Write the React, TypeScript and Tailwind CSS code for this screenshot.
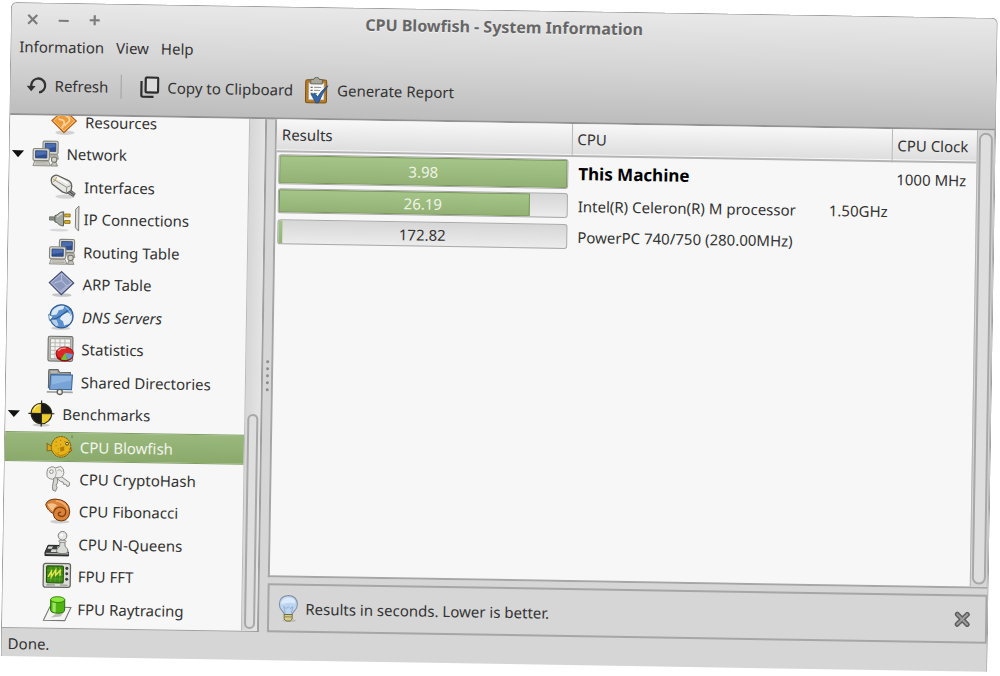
import React from "react";

type IconName =
  | "resources" | "network" | "interfaces" | "plug" | "arp" | "globe" | "stats" | "folder"
  | "target" | "fish" | "keys" | "shell" | "queens" | "scope" | "raytrace";

const Screens = () => (
  <>
    <ellipse cx="13" cy="22.5" rx="9" ry="1.2" fill="#d0d0d0" />
    <rect x="9.5" y="0.5" width="14" height="12" rx="1.5" fill="#d4d4cc" stroke="#84847c" />
    <rect x="11.6" y="2.5" width="9.8" height="7.4" fill="#2d4f94" stroke="#243a6b" strokeWidth="0.7" />
    <path d="M12 2.9h9v3l-9 1.6z" fill="#4c6eae" />
    <path d="M15 13h8l1 4h-6z" fill="#b9b9b1" stroke="#84847c" strokeWidth="0.7" />
    <rect x="0.5" y="7.5" width="15" height="11" rx="1.5" fill="#dcdcd4" stroke="#84847c" />
    <rect x="2.8" y="9.5" width="10.4" height="6.6" fill="#2d4f94" stroke="#243a6b" strokeWidth="0.7" />
    <path d="M3.2 9.900h9.600v2.600l-9.600 1.700z" fill="#4c6eae" />
    <path d="M2 19h13l1.500 4.300h-16z" fill="#d8d8d0" stroke="#84847c" strokeWidth="0.8" />
    <path d="M3 20.500h11M2.600 21.800h12" stroke="#9a9a92" strokeWidth="0.600" />
    <circle cx="20" cy="17.500" r="2.500" fill="#d4d4cc" stroke="#77776f" />
    <path d="M18.500 20.200h3.400l1.300 3.200h-6z" fill="#c4c4bc" stroke="#77776f" strokeWidth="0.700" />
  </>
);

const drawings: Record<IconName, React.ReactNode> = {
  resources: (
    <>
      <ellipse cx="13" cy="22" rx="9" ry="2" fill="#d2d2d2" />
      <path d="M12 0.7 23.3 11 12 22 0.7 11z" fill="#ee9a38" stroke="#b4621a" />
      <path d="M12 2.4 21.6 11 12 20.3 2.4 11z" fill="none" stroke="#f8c37c" strokeWidth="0.9" />
      <path d="M7 9c2 3 4-1 5 3s-3 3-1 6M12 4c0 4 5 2 5 6s-4 2-4 6" fill="none" stroke="#f9d3a0" strokeWidth="1.6" />
    </>
  ),
  network: <Screens />,
  interfaces: (
    <>
      <ellipse cx="14" cy="21" rx="9" ry="2" fill="#d5d5d5" />
      <path d="M18 14l5.400 4-1.800 2.800-6-3.400z" fill="#8d8d8d" stroke="#555" strokeWidth="0.8" />
      <path d="M17 15.500l5 3.800" stroke="#3f3f3f" strokeWidth="0.9" />
      <path d="M1 5.500C1 3 4.500.600 7 1.600L17 6.200q3 1.600 3 5.400l-.6 3.800-4 2.500-4-1.300L2 9.500q-1-1-1-4z" fill="#e6e6e2" stroke="#5e5e5a" strokeWidth="1.200" />
      <path d="M3 5.200 15.500 12.400l-.4 4.600M15.500 12.400l4.200-2" fill="none" stroke="#8f8f8b" strokeWidth="0.9" />
      <path d="M5.500 3.200 16 8.600" stroke="#fff" strokeWidth="1.500" />
      <path d="M3 7.500 6.300 3" stroke="#c9a94a" strokeWidth="1" />
    </>
  ),
  plug: (
    <>
      <ellipse cx="9" cy="22.500" rx="9" ry="1.300" fill="#d8d8d8" />
      <path d="M0 10.300h6v3H0z" fill="#8b8f86" stroke="#60645b" strokeWidth="0.7" />
      <path d="M5 9c3 0 3-3.500 8-3.500v13c-5 0-5-3.500-8-3.500z" fill="#a7aaa3" stroke="#555a50" strokeWidth="0.9" />
      <path d="M7 10c2-.5 2.500-2.500 4.500-2.800" stroke="#e3e5e0" fill="none" />
      <path d="M14 7.500h5v2.600h-5zM14 13.500h5v2.600h-5z" fill="#d8b42c" stroke="#8a6c10" strokeWidth="0.8" />
      <path d="M27 0v23l-3-3V3z" fill="#dcdcd8" stroke="#7b7b77" strokeWidth="0.9" />
    </>
  ),
  arp: (
    <>
      <ellipse cx="12.500" cy="22.300" rx="9" ry="1.700" fill="#c6c6c6" />
      <path d="M12 0.700 23.300 11 12 22 0.700 11z" fill="#8c98bc" stroke="#424c72" />
      <path d="M12 2.400 21.600 11 12 20.300 2.400 11z" fill="none" stroke="#b9c2dc" strokeWidth="0.9" />
      <path d="M12 3v6L5 11.500M12 9l5 5-6 5M17 14l4-3" fill="none" stroke="#b4bdd8" strokeWidth="1" />
    </>
  ),
  globe: (
    <>
      <ellipse cx="12" cy="22.500" rx="9" ry="1.500" fill="#ccc" />
      <circle cx="12.500" cy="11.500" r="10.700" fill="#5b90cc" stroke="#2a558f" />
      <path d="M4.500 5.500q5.500-5 10.500-3.500l-1 3-4 1-2 4-5 1q0-4 1.500-5.500z" fill="#d9e6f4" />
      <path d="M13 10l5-2 4 2q1 5-2.500 8.500L15 20l-1-4-3-2z" fill="#e5eef8" />
      <path d="M3 14l5 1 2 5-2 .8q-4-2.500-5-6.800z" fill="#b5cfea" />
      <path d="M1 14q6 1 12-4 5-4 8.500-5.500" fill="none" stroke="#2c5f9f" strokeWidth="1.300" />
      <path d="M16 3q5 3 5 8" fill="none" stroke="#a9c8e8" strokeWidth="1" />
      <path d="M0.500 10l4.500 2-3.500 3.500z" fill="#eef4fb" stroke="#4874ab" strokeWidth="0.7" />
    </>
  ),
  stats: (
    <>
      <rect x="0.600" y="0.600" width="22.800" height="22.800" rx="1.500" fill="#bebeba" stroke="#6f6f6c" />
      <rect x="2.800" y="2.800" width="18.400" height="18.400" fill="#f3f3f1" stroke="#90908c" strokeWidth="0.7" />
      <path d="M3 6.500h18M3 10h18M3 13.500h18M3 17h18M7 3v18M11.500 3v18M16 3v18" stroke="#b0b0ac" strokeWidth="0.800" />
      <ellipse cx="16" cy="18" rx="8" ry="5.600" fill="#9a0c0c" />
      <ellipse cx="16" cy="16" rx="8" ry="5.700" fill="#dc2626" stroke="#8e1010" strokeWidth="0.800" />
      <path d="M16.500 15.500l7 1q0 4-5 5.500z" fill="#6c94cc" />
      <path d="M16.500 15.500l2 6.500q-3 .8-6-.4z" fill="#72c02e" />
      <path d="M10 14q2-3 7-2.600" stroke="#f49b9b" strokeWidth="1.200" fill="none" />
    </>
  ),
  folder: (
    <>
      <path d="M2 0.700h8l1.500 2.500h10v14.500H1.500V2z" fill="#9c9c99" stroke="#646462" />
      <path d="M3.500 3h6" stroke="#d0d0ce" />
      <path d="M3.500 5.500h20L22.800 19H2.600z" fill="#78a3d6" stroke="#3b699f" />
      <path d="M4.500 6.500h18l-.4 4-17.500 4z" fill="#8fb6e1" />
      <path d="M0 21.500h24" stroke="#a4a4a0" strokeWidth="1.500" />
      <circle cx="12" cy="21.300" r="2.400" fill="#ecece8" stroke="#5e5e5a" strokeWidth="1.200" />
    </>
  ),
  target: (
    <>
      <ellipse cx="12" cy="22.700" rx="8" ry="1.300" fill="#c8c8c8" />
      <path d="M12 12V2.500A9.500 9.500 0 0 0 2.500 12zM12 12v9.500A9.500 9.500 0 0 0 21.500 12z" fill="#eccd2c" />
      <path d="M12 12V2.500A9.500 9.500 0 0 1 21.500 12zM12 12v9.500A9.500 9.500 0 0 1 2.500 12z" fill="#181818" />
      <circle cx="12" cy="12" r="9.500" fill="none" stroke="#2c2a14" strokeWidth="1" />
      <path d="M12 0v24M0 12h24" stroke="#222" strokeWidth="1.100" />
      <path d="M5 9q1-4 5-5" stroke="#f9ea90" fill="none" strokeWidth="1.200" />
    </>
  ),
  fish: (
    <>
      <path d="M6.500 12 .8 9q1 3 .3 7l5.900-1z" fill="#d9a516" stroke="#7a5705" strokeWidth="0.700" />
      <ellipse cx="14" cy="12" rx="9" ry="9.500" fill="#e4b41c" stroke="#6f5206" strokeWidth="0.900" strokeDasharray="1.800 .6" />
      <path d="M7 15q6 8 14 1-2 4.500-7 4.800-4 0-7-5.800z" fill="#c48e0c" />
      <path d="M9 7.500h1M13 6h1M17 7h1M9 11h1M13 10h1M11 14h1M15 15h1M11 17.500h1" stroke="#a97a08" strokeWidth="1" />
      <path d="M13 12.500l4-1v4l-3.500 1z" fill="#b57d08" />
      <circle cx="19.500" cy="9" r="1.300" fill="#f9f2c0" stroke="#3c2c02" strokeWidth="0.800" />
      <path d="M21.500 14q2.500-1 2.500.6T21 16.500" fill="#e29c14" stroke="#7a4d05" strokeWidth="0.700" />
      <path d="M24 1.200v2.600" stroke="#5f7f45" strokeWidth="0.900" />
    </>
  ),
  keys: (
    <>
      <path d="M10 10q3 4 0 8l1 2-1.500 3.500-2.500-1-.3-3.500L8 11z" fill="#d4d4d0" stroke="#858581" strokeWidth="0.900" />
      <path d="M13.500 9l9 6.500-.5 3-2 .3-1-2-2 .2-.7-2.200-2-.2-3.500-3z" fill="#e5e5e2" stroke="#858581" strokeWidth="0.900" />
      <path d="M2 3q4-3.500 7-1l5-1.500q3 1.500 3 5.500t-4 5l-4.500 0-2 1.500Q2 12 1.500 9t.5-6z" fill="#ececea" stroke="#8c8c88" strokeWidth="0.900" />
      <circle cx="5.500" cy="5.500" r="1.700" fill="#f7f7f7" stroke="#8c8c88" strokeWidth="0.900" />
      <path d="M9 2.500q2 4 0 8.500M11 4.500q3-2 4 1" fill="none" stroke="#a8a8a4" strokeWidth="0.900" />
    </>
  ),
  shell: (
    <>
      <ellipse cx="14" cy="22" rx="9" ry="1.700" fill="#cfcfcf" />
      <path d="M.7 6.500Q2 1.500 9.500 1.200q13 .5 13.500 11.500-.5 8-7.500 8.600-7.200-.3-7.500-6.500Q2.500 12 .7 6.500z" fill="#d9823a" stroke="#6e3208" strokeWidth="0.900" />
      <path d="M2.500 6q5-2.500 9 1.200Q8 9 7.500 12.500 3.500 10 2.500 6z" fill="#f6c08c" />
      <path d="M8 14.500q1-6 6.500-6 5 .5 4.800 5-.5 3.700-4.300 3.700-2.700-.5-2.500-2.800.8-1.500 2.500-1" fill="none" stroke="#85410f" strokeWidth="1.200" />
      <path d="M10 2.800q9 .5 11 8" stroke="#f3ad70" strokeWidth="1.600" fill="none" />
    </>
  ),
  queens: (
    <>
      <path d="M3.500 13.500h14l5 6.500v3H.8v-3z" fill="#3c3f3b" stroke="#222" strokeWidth="0.900" />
      <path d="M4 14.500h4l-1 2.200H3zM12 14.500h4l1.500 2.200H12zM7 17.200h5v2.400H6z" fill="#d7dad5" />
      <path d="M1.500 21h21" stroke="#a4a7a2" strokeWidth="1.200" />
      <path d="M14.500 9.500h4.400l.4 5q2.700 1.500 2.700 4t-5.300 2.500-5.300-2.500 2.700-4z" fill="#d9dbd7" stroke="#797c76" strokeWidth="0.900" />
      <ellipse cx="16.700" cy="9.500" rx="3.500" ry="1.200" fill="#ececea" stroke="#797c76" strokeWidth="0.800" />
      <circle cx="16.700" cy="4.500" r="4" fill="#e6e7e4" stroke="#797c76" strokeWidth="0.900" />
      <circle cx="16" cy="3.800" r="1.500" fill="#fff" />
    </>
  ),
  scope: (
    <>
      <rect x="-0.500" y="0.600" width="25" height="22" rx="2" fill="#dcdcd8" stroke="#646460" strokeWidth="1.200" />
      <rect x="2.500" y="3" width="15.500" height="15.500" rx="1" fill="#3c8a12" stroke="#23500a" />
      <path d="M3 7h14.500M3 11h14.500M3 15h14.500M6.500 3.500v14.500M10.500 3.500v14.500M14.500 3.500v14.500" stroke="#5faa35" strokeWidth="0.600" />
      <path d="M4 13l3-5v5l4-6.500v5l4-4.500v5" fill="none" stroke="#e4e650" strokeWidth="1.300" />
      <circle cx="21.200" cy="5" r="1.400" fill="#3b3b3b" />
      <circle cx="21.200" cy="10" r="1.400" fill="#3b3b3b" />
      <circle cx="21.200" cy="15" r="1.400" fill="#3b3b3b" />
      <path d="M2.500 20.500h8M15 20.500h7" stroke="#8c8c88" />
    </>
  ),
  raytrace: (
    <>
      <path d="M6 10.500h19.500L20 22.800H.3z" fill="#f4f4f2" stroke="#777773" />
      <path d="M7 20l9-1 4-5-6 1z" fill="#bdbdb9" />
      <path d="M6.700 3.500v9.500q0 3 6.500 3t6.500-3V3.500z" fill="#4fb412" stroke="#2c7205" strokeWidth="0.900" />
      <path d="M8.500 6v8q1 1 3 1.200V6.500z" fill="#a0e560" />
      <ellipse cx="13.200" cy="3.500" rx="6.500" ry="2.700" fill="#8be83c" stroke="#35850a" strokeWidth="0.900" />
    </>
  ),
};

const TreeIcon = ({ name }: { name: IconName }) => (
  <svg viewBox="0 0 24 24" className="size-[26px] shrink-0 overflow-visible" aria-hidden="true">
    {drawings[name]}
  </svg>
);

interface TreeItem {
  label: string;
  icon: IconName;
  group?: boolean;
  selected?: boolean;
  italic?: boolean;
}

const tree: TreeItem[] = [
  { label: "Resources", icon: "resources" },
  { label: "Network", icon: "network", group: true },
  { label: "Interfaces", icon: "interfaces" },
  { label: "IP Connections", icon: "plug" },
  { label: "Routing Table", icon: "network" },
  { label: "ARP Table", icon: "arp" },
  { label: "DNS Servers", icon: "globe", italic: true },
  { label: "Statistics", icon: "stats" },
  { label: "Shared Directories", icon: "folder" },
  { label: "Benchmarks", icon: "target", group: true },
  { label: "CPU Blowfish", icon: "fish", selected: true },
  { label: "CPU CryptoHash", icon: "keys" },
  { label: "CPU Fibonacci", icon: "shell" },
  { label: "CPU N-Queens", icon: "queens" },
  { label: "FPU FFT", icon: "scope" },
  { label: "FPU Raytracing", icon: "raytrace" },
];

const results = [
  { value: "3.98", fill: 100, cpu: "This Machine", clock: "1000 MHz", own: true },
  { value: "26.19", fill: 87, cpu: "Intel(R) Celeron(R) M processor", speed: "1.50GHz", clock: "" },
  { value: "172.82", fill: 1.5, cpu: "PowerPC 740/750 (280.00MHz)", clock: "" },
];

const TitleBar = () => (
  <div className="grid h-8 grid-cols-[1fr_auto_1fr] items-center px-[15px]">
    <div className="flex gap-[19px] text-[#7c7c7c]">
      <button aria-label="Close" className="grid size-3">
        <svg viewBox="0 0 12 12" className="size-3"><path d="M1.500 1.500l9 9M10.500 1.500l-9 9" stroke="currentColor" strokeWidth="2.200" /></svg>
      </button>
      <button aria-label="Minimize" className="grid size-3">
        <svg viewBox="0 0 12 12" className="size-3"><path d="M1 7h10" stroke="currentColor" strokeWidth="2" /></svg>
      </button>
      <button aria-label="Maximize" className="grid size-3">
        <svg viewBox="0 0 12 12" className="size-3"><path d="M1 6h10M6 1v10" stroke="currentColor" strokeWidth="2.200" /></svg>
      </button>
    </div>
    <h1 className="text-base leading-5 font-bold text-[#666] [text-shadow:0_1px_0_#f2f2f2]">
      CPU Blowfish - System Information
    </h1>
  </div>
);

const ToolBar = () => (
  <div className="flex h-14 items-center pl-4">
    <button className="flex items-center gap-2">
      <svg viewBox="0 0 20 20" className="size-5" fill="none" aria-hidden="true">
        <path d="M5 12.500A7 7 0 1 1 12.500 17" stroke="#333" strokeWidth="2.300" />
        <path d="M0 10.500h9L4.600 15.800z" fill="#333" />
      </svg>
      Refresh
    </button>
    <span className="mr-[18px] ml-3 h-6 w-px bg-[#a2a2a2]" />
    <button className="flex items-center gap-2">
      <svg viewBox="0 0 20 22" className="h-[22px] w-5" fill="none" aria-hidden="true">
        <rect x="6" y="1.200" width="12.500" height="15" rx="1.200" fill="#dcdcdc" stroke="#2c2c2c" strokeWidth="2.200" />
        <path d="M1.800 5v14q0 1.600 1.600 1.600H14" stroke="#2c2c2c" strokeWidth="2.200" />
      </svg>
      Copy to Clipboard
    </button>
    <button className="ml-3 flex items-center gap-2">
      <svg viewBox="0 0 24 27" className="h-[27px] w-6" aria-hidden="true">
        <rect x="1" y="3" width="21" height="23" rx="1.800" fill="#b87d24" stroke="#7d5110" />
        <path d="M4 6h15.500v17H4z" fill="#f6f6f4" stroke="#999" strokeWidth="0.600" />
        <path d="M6 2.500h3q.2-2 2.800-2t2.800 2h3v4.500H6z" fill="#a8a89c" stroke="#5d5d52" strokeWidth="0.900" />
        <path d="M6 10.500h2M6 13.500h2M6 16.500h2" stroke="#666" strokeWidth="1.200" />
        <path d="M9.500 10.500h7M9.500 13.500h6M9.500 16.500h3" stroke="#9a9a9a" strokeWidth="1.100" />
        <path d="M6.500 17.500l4-1 2.500 3.500q4-7 10.500-11.500-6 8-9.500 17.500h-2.500z" fill="#3465a4" stroke="#1f467e" strokeWidth="0.700" />
      </svg>
      Generate Report
    </button>
  </div>
);

const Sidebar = () => (
  <nav aria-label="Modules" className="flex w-[257px] shrink-0 overflow-hidden border-r-2 border-b border-[#a0a0a0] bg-[#f7f7f7]">
    <ul className="-mt-[9px] -mb-px flex h-[517px] min-w-0 flex-1 flex-col justify-between">
      {tree.map((item) => (
        <li key={item.label}>
          <button
            className={
              "flex h-[30px] w-full items-center gap-2 text-left " +
              (item.selected
                ? "border-y border-[#7f9e63] bg-linear-to-b from-[#9ab87c] to-[#8aa96b] text-[#f2f5ee] "
                : "") +
              (item.group ? "pl-0.5" : "pl-[41px]")
            }
          >
            {item.group && (
              <svg viewBox="0 0 14 8" className="h-[7px] w-[13px]" aria-hidden="true"><path d="M0 0h14L7 8z" fill="#111" /></svg>
            )}
            <TreeIcon name={item.icon} />
            <span className={item.italic ? "leading-4 italic" : "leading-4"}>{item.label}</span>
          </button>
        </li>
      ))}
    </ul>
    <div className="flex w-4 flex-col justify-end border-l border-[#bcbcbc] bg-linear-to-r from-[#d6d6d6] to-[#e4e4e4] px-0.5 pb-0.5">
      <div className="h-[215px] rounded-full border-2 border-[#a8a8a8] bg-[#dedede]" />
    </div>
  </nav>
);

const Results = () => (
  <section className="flex min-h-0 flex-1 border-b-2 border-l-2 border-[#a6a6a6] bg-[#f7f7f7]">
    <div className="min-w-0 flex-1">
      <table className="w-full table-fixed border-collapse text-left">
        <colgroup>
          <col className="w-[295px]" />
          <col />
          <col className="w-[85px]" />
        </colgroup>
        <thead>
          <tr className="h-8 border-b-2 border-[#b4b4b4] bg-linear-to-b from-[#f8f8f8] to-[#dedede]">
            <th className="pb-px pl-[5px] font-normal">Results</th>
            <th className="border-l border-[#b8b8b8] pb-px pl-[5px] font-normal">CPU</th>
            <th className="border-l border-[#b8b8b8] pl-[5px] font-normal whitespace-nowrap">CPU Clock</th>
          </tr>
        </thead>
        <tbody>
          {results.map((r) => (
            <tr key={r.value} className={r.own ? "h-[34px]" : "h-[31px]"}>
              <td className="pr-[3px] pl-0.5">
                <div
                  role="progressbar"
                  aria-label={r.cpu}
                  aria-valuenow={r.fill}
                  className={
                    "grid overflow-hidden rounded-[3px] border border-[#a9a9a9] bg-linear-to-b from-[#d6d6d6] to-[#ececec] " +
                    (r.own ? "h-[30px]" : "h-[25px]")
                  }
                >
                  <div
                    className={
                      "col-start-1 row-start-1 bg-linear-to-b from-[#a5c588] to-[#93b174] " +
                      (r.fill > 50 ? "border border-[#7d985f]" : "")
                    }
                    style={{ width: `${r.fill}%` }}
                  />
                  <span className={"col-start-1 row-start-1 self-center text-center " + (r.fill > 50 ? "text-[#eef3e8]" : "")}>
                    {r.value}
                  </span>
                </div>
              </td>
              <td className={r.own ? "pl-[7px] text-[17px] leading-6 font-bold text-black" : "pl-[7px]"}>
                <span className="flex gap-[33px] whitespace-nowrap">
                  <span>{r.cpu}</span>
                  {r.speed && <span>{r.speed}</span>}
                </span>
              </td>
              <td className="pl-[5px] whitespace-nowrap">{r.clock}</td>
            </tr>
          ))}
        </tbody>
      </table>
    </div>
    <div className="flex w-[18px] border-x border-[#b4b4b4] bg-[#d6d6d6] px-px py-0.5">
      <div className="flex-1 rounded-full border-2 border-[#a8a8a8] bg-[#dedede]" />
    </div>
  </section>
);

const InfoBar = () => (
  <div className="mt-1.5 flex h-[49px] items-center border-2 border-[#a6a6a6] pr-[15px] pl-2">
    <svg viewBox="0 0 22 28" className="h-7 w-[22px]" aria-hidden="true">
      <ellipse cx="12" cy="26" rx="7" ry="1.500" fill="#bdbdbd" />
      <path d="M11 1q9 .5 9 9 0 3.500-3 6.500-2 2-2 3.500H7q0-1.500-2-3.500-3-3-3-6.500Q2 1.500 11 1z" fill="#bcd5f2" stroke="#7f8ca0" />
      <path d="M4 10q0-6.500 7-7 7 .5 7 6-7-2-14 1z" fill="#dceafb" />
      <path d="M8 19l-1.500-7 2.500 2 2-2 2 2 2.500-2L14 19" fill="none" stroke="#8fa6c8" strokeWidth="0.800" />
      <path d="M7 20h8v4.500l-2 2H9l-2-2z" fill="#d9cf8a" stroke="#6a6432" strokeWidth="0.900" />
      <path d="M7 22.300h8" stroke="#8c8550" />
    </svg>
    <p className="ml-1.5 flex-1">Results in seconds. Lower is better.</p>
    <button aria-label="Close message">
      <svg viewBox="0 0 16 16" className="size-4" aria-hidden="true">
        <path d="M3 3l10 10M13 3L3 13" stroke="#5e5e5e" strokeWidth="5" strokeLinecap="round" />
        <path d="M3 3l10 10M13 3L3 13" stroke="#9c9c9c" strokeWidth="2" strokeLinecap="round" />
      </svg>
    </button>
  </div>
);

export default function App() {
  return (
    <div className="min-h-screen overflow-hidden bg-white pt-0.5 pr-0.5 pl-[11px]">
      <div className="origin-top-left rotate-[0.92deg] overflow-hidden rounded-t-md border border-b-0 border-[#a0a0a0] bg-[#d6d6d6] font-['Noto_Sans',sans-serif] text-[15px] leading-5 text-[#333]">
        <header className="border-b-2 border-[#939393] bg-linear-to-b from-[#e8e8e8] via-[#d5d5d5] to-[#bdbdbd]">
          <TitleBar />
          <div className="flex h-[22px] items-center gap-3 pl-2">
            <button>Information</button>
            <button>View</button>
            <button>Help</button>
          </div>
          <ToolBar />
        </header>
        <div className="flex h-[513px]">
          <Sidebar />
          <div className="flex w-2 shrink-0 flex-col items-center justify-center gap-1">
            {[0, 1, 2, 3, 4].map((dot) => (
              <span key={dot} className="size-[3px] rounded-full bg-[#8c8c8c]" />
            ))}
          </div>
          <main className="flex min-w-0 flex-1 flex-col">
            <Results />
            <InfoBar />
          </main>
        </div>
        <footer className="h-7 pt-[5px] pl-1.5">Done.</footer>
      </div>
    </div>
  );
}
